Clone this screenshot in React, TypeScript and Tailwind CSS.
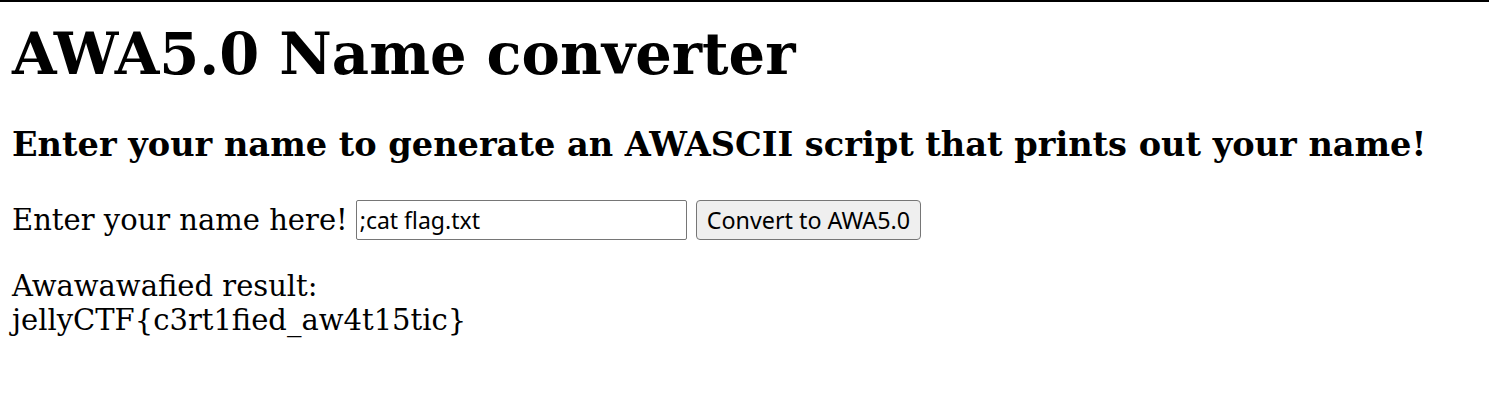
export default function App() {
  return (
    <div className="min-h-[412px] bg-white text-black">
      <div className="h-[2px] w-full bg-black" />
      <div className="px-[12px] font-['DejaVu_Serif',serif] text-[29px] leading-[34px]">
        <h1 className="mt-[18px] text-[57.5px] font-bold leading-[68px]">AWA5.0 Name converter</h1>
        <h3 className="mt-[36px] text-[33.6px] font-bold leading-[40px]">
          Enter your name to generate an AWASCII script that prints out your name!
        </h3>
        <form className="mt-[36px] flex items-center" onSubmit={(e) => e.preventDefault()}>
          <label htmlFor="name">Enter your name here!</label>
          <input
            id="name"
            type="text"
            defaultValue=";cat flag.txt"
            className="ml-[8px] h-[40px] w-[331px] rounded-[2px] border border-[#767676] px-[3px] font-['Noto_Sans',sans-serif] text-[23px] outline-none"
          />
          <button
            type="submit"
            className="ml-[9px] h-[40px] rounded-[4px] border border-[#767676] bg-[#efefef] px-[10px] font-['Noto_Sans',sans-serif] text-[23.3px]"
          >
            Convert to AWA5.0
          </button>
        </form>
        <div className="mt-[29px]">
          <p>Awawawafied result:</p>
          <p>jellyCTF{'{'}c3rt1fied_aw4t15tic{'}'}</p>
        </div>
      </div>
    </div>
  )
}
